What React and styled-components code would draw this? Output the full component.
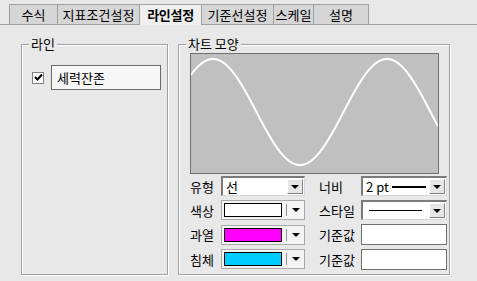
import React from 'react';
import styled, { createGlobalStyle } from 'styled-components';

const GlobalStyle = createGlobalStyle`
  html, body {
    margin: 0;
    padding: 0;
    background: #e8e8e8;
  }
  body {
    font-family: "Noto Sans CJK KR", "Noto Sans", sans-serif;
    font-size: 13px;
    color: #000;
  }
`;

const tabs = [
  { label: '수식', width: 48 },
  { label: '지표조건설정', width: 82 },
  { label: '라인설정', width: 62, active: true },
  { label: '기준선설정', width: 72 },
  { label: '스케일', width: 40 },
  { label: '설명', width: 56 },
];

// sine wave drawn inside the chart box
const wavePath = () => {
  const pts = [];
  for (let x = 0; x <= 247; x += 1) {
    const y = 58 - 53 * Math.sin((2 * Math.PI * (x + 190 - 168.5)) / 174);
    pts.push(`${x === 0 ? 'M' : 'L'}${x},${y.toFixed(2)}`);
  }
  return pts.join(' ');
};

const App = () => {
  return (
    <Page>
      <GlobalStyle />
      <TabBar>
        {tabs.map((t) => (
          <Tab key={t.label} $w={t.width} $active={t.active}>
            {t.label}
          </Tab>
        ))}
      </TabBar>

      <Content>
        <Group $w={147}>
          <Legend>라인</Legend>
          <LineRow>
            <CheckBox>
              <svg width="9" height="9" viewBox="0 0 9 9">
                <path d="M1 4 L3.5 6.5 L8 1.5" stroke="#000" strokeWidth="2" fill="none" />
              </svg>
            </CheckBox>
            <NameField>세력잔존</NameField>
          </LineRow>
        </Group>

        <Group $w={272} $chart>
          <Legend>차트 모양</Legend>
          <Chart>
            <svg width="247" height="119" viewBox="0 0 247 119">
              <path d={wavePath()} stroke="#fff" strokeWidth="2" fill="none" />
            </svg>
          </Chart>

          <Form>
            <Label>유형</Label>
            <Combo>
              <ComboText>선</ComboText>
              <ArrowButton><Arrow /></ArrowButton>
            </Combo>
            <Label $pad>너비</Label>
            <Combo>
              <ComboText>2 pt</ComboText>
              <Stroke $w={34} $h={2} $ml={3} />
              <ArrowButton><Arrow /></ArrowButton>
            </Combo>

            <Label>색상</Label>
            <ColorCombo>
              <Swatch $color="#ffffff" />
              <Sep />
              <ArrowSlot><Arrow /></ArrowSlot>
            </ColorCombo>
            <Label $pad>스타일</Label>
            <Combo>
              <Stroke $w={53} $h={1} $ml={6} />
              <ArrowButton><Arrow /></ArrowButton>
            </Combo>

            <Label>과열</Label>
            <ColorCombo>
              <Swatch $color="#ff00ff" />
              <Sep />
              <ArrowSlot><Arrow /></ArrowSlot>
            </ColorCombo>
            <Label $pad>기준값</Label>
            <Input />

            <Label>침체</Label>
            <ColorCombo>
              <Swatch $color="#00ccff" />
              <Sep />
              <ArrowSlot><Arrow /></ArrowSlot>
            </ColorCombo>
            <Label $pad>기준값</Label>
            <Input />
          </Form>
        </Group>
      </Content>
    </Page>
  );
};

export default App;

const Page = styled.div`
  width: 477px;
  height: 281px;
  overflow: hidden;
  background: #e8e8e8;
`

const TabBar = styled.div`
  display: flex;
  align-items: flex-end;
  height: 20px;
  padding: 4px 0 0 9px;
  border-bottom: 1px solid #a0a0a0;
`

const Tab = styled.div`
  box-sizing: border-box;
  width: ${({ $w }) => $w}px;
  height: ${({ $active }) => ($active ? 21 : 20)}px;
  margin-bottom: ${({ $active }) => ($active ? -1 : 0)}px;
  display: flex;
  align-items: center;
  justify-content: center;
  padding-bottom: ${({ $active }) => ($active ? 1 : 0)}px;
  border-top: 1px solid #a0a0a0;
  border-left: 1px solid #a0a0a0;
  background: ${({ $active }) => ($active ? '#efefef' : '#d6d6d6')};
  font-weight: ${({ $active }) => ($active ? 700 : 400)};
  font-size: 13px;
  letter-spacing: ${({ $active }) => ($active ? '-0.3px' : '0')};
  white-space: nowrap;

  &:last-child {
    border-right: 1px solid #a0a0a0;
  }
`

const Content = styled.div`
  display: flex;
  gap: 10px;
  padding: 19px 0 0 21px;
`

const Group = styled.div`
  position: relative;
  box-sizing: border-box;
  width: ${({ $w }) => $w}px;
  height: 231px;
  border: 1px solid #a0a0a0;
  box-shadow: 1px 1px 0 #fff, inset 1px 1px 0 #fff;
  padding: ${({ $chart }) => ($chart ? '8px 0 0 11px' : '20px 0 0 10px')};
`

const Legend = styled.div`
  position: absolute;
  top: -10px;
  left: 7px;
  padding: 0 2px;
  background: #e8e8e8;
  line-height: 18px;
  font-size: 13px;
`

const LineRow = styled.div`
  display: flex;
  align-items: center;
  gap: 7px;
`

const CheckBox = styled.div`
  box-sizing: border-box;
  width: 12px;
  height: 12px;
  border: 1px solid #808080;
  background: #fff;
  display: flex;
  align-items: center;
  justify-content: center;
`

const NameField = styled.div`
  box-sizing: border-box;
  width: 110px;
  height: 25px;
  border: 1px solid #6a6a6a;
  background: #f6f6f6;
  padding-left: 5px;
  display: flex;
  align-items: center;
  font-size: 13px;
`

const Chart = styled.div`
  box-sizing: border-box;
  width: 249px;
  height: 121px;
  border: 1px solid #707070;
  background: #c0c0c0;
  svg {
    display: block;
  }
`

const Form = styled.div`
  display: grid;
  grid-template-columns: 31px 84px 56px 86px;
  grid-template-rows: repeat(4, 20px);
  row-gap: 4.4px;
  margin-top: 2px;
  align-items: center;
`

const Label = styled.div`
  padding-left: ${({ $pad }) => ($pad ? 14 : 0)}px;
  font-size: 13px;
  white-space: nowrap;
`

const Combo = styled.div`
  box-sizing: border-box;
  height: 20px;
  display: flex;
  align-items: center;
  background: #fff;
  border-style: solid;
  border-width: 2px 1px 1px 2px;
  border-color: #7a7a7a #d8d8d8 #d8d8d8 #7a7a7a;
`

const ComboText = styled.span`
  padding-left: 3px;
  font-size: 13px;
`

const Stroke = styled.span`
  width: ${({ $w }) => $w}px;
  height: ${({ $h }) => $h}px;
  margin-left: ${({ $ml }) => $ml}px;
  background: #000;
`

const ArrowButton = styled.div`
  box-sizing: border-box;
  margin-left: auto;
  margin-right: 1px;
  width: 16px;
  height: 15px;
  display: flex;
  align-items: center;
  justify-content: center;
  background: #e6e6e6;
  border-style: solid;
  border-width: 1px;
  border-color: #fff #808080 #808080 #fff;
`

const Arrow = styled.span`
  width: 0;
  height: 0;
  border-left: 4px solid transparent;
  border-right: 4px solid transparent;
  border-top: 4px solid #000;
`

const ColorCombo = styled.div`
  box-sizing: border-box;
  height: 20px;
  display: flex;
  align-items: center;
  padding-left: 2px;
  border: 1px solid #a8a8a8;
  background: #f4f4f4;
`

const Swatch = styled.span`
  box-sizing: border-box;
  width: 58px;
  height: 14px;
  border: 1px solid #000;
  background: ${({ $color }) => $color};
`

const Sep = styled.span`
  width: 1px;
  height: 12px;
  margin-left: 4px;
  background: #909090;
`

const ArrowSlot = styled.span`
  flex: 1;
  display: flex;
  justify-content: center;
`

const Input = styled.div`
  box-sizing: border-box;
  height: 21px;
  background: #fff;
  border: 1px solid #707070;
`
